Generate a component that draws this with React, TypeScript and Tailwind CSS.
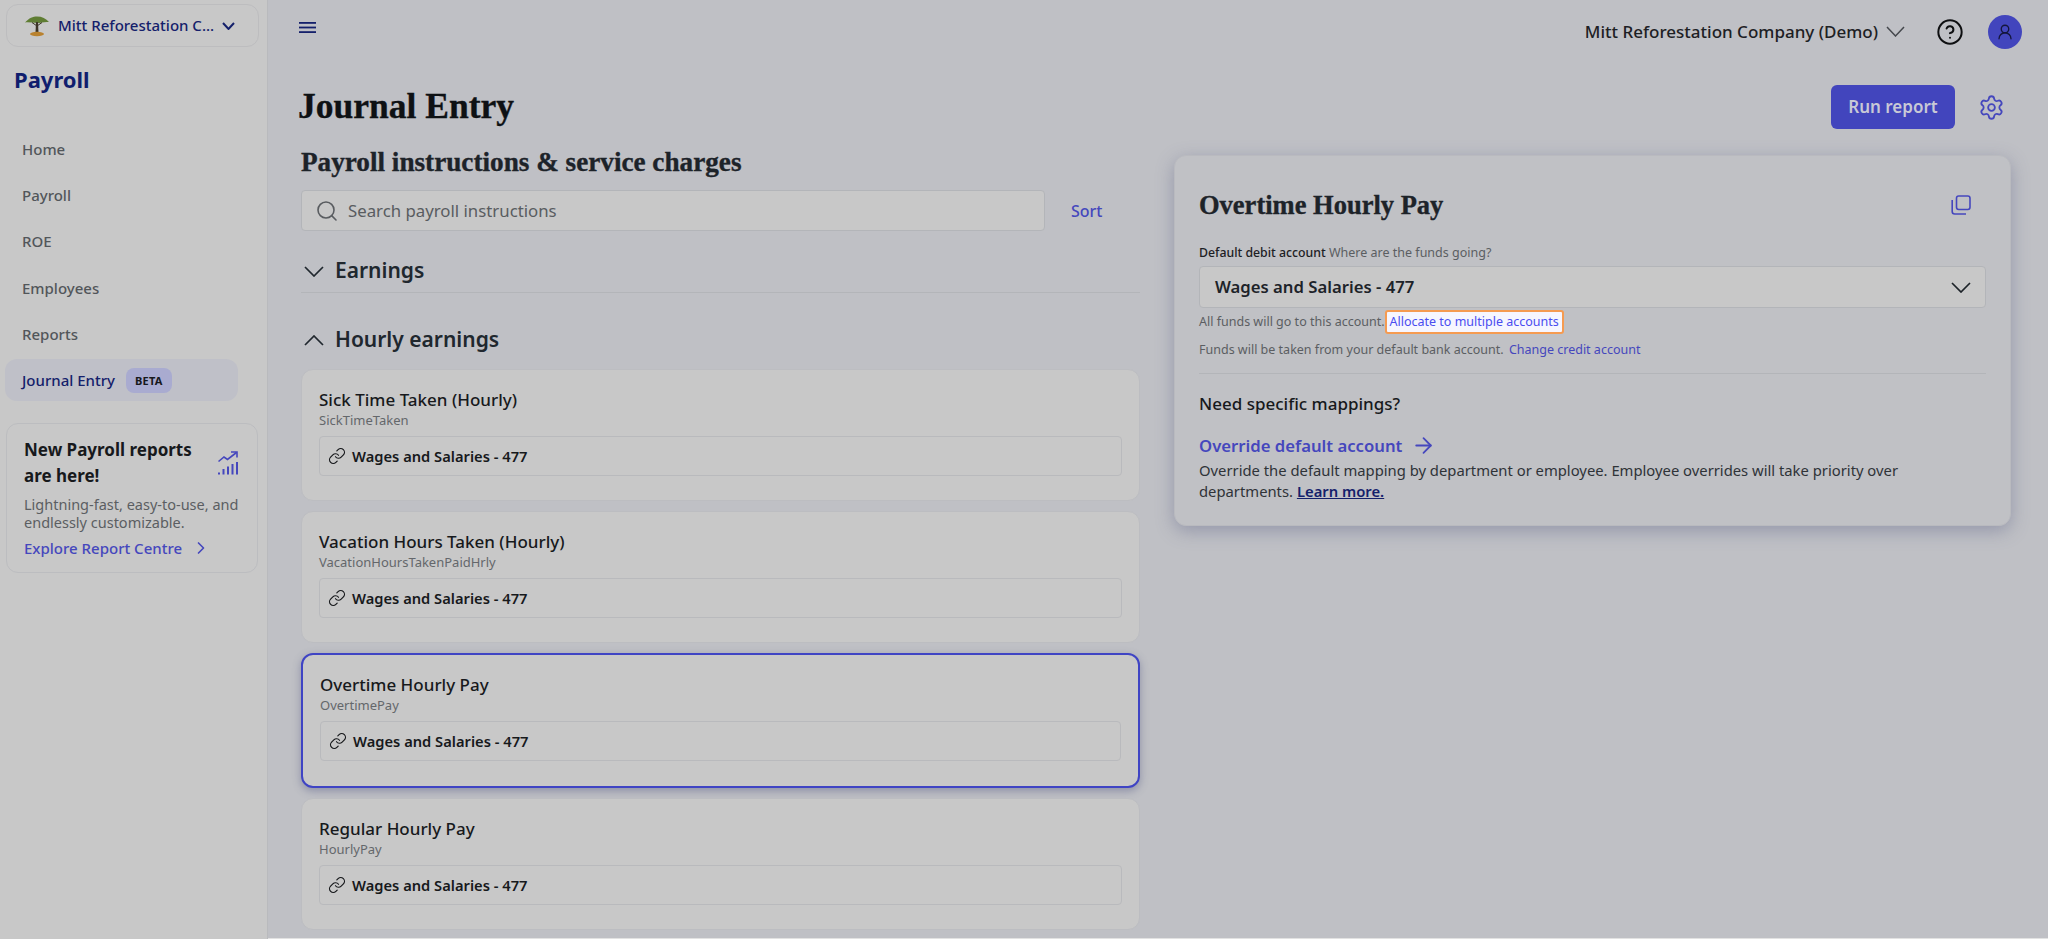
import { ArrowRight, ChevronRight, CircleHelp, Link, Search, Settings, UserRound } from 'lucide-react';

const SANS = "font-['Noto_Sans','Open_Sans',sans-serif]";
const SERIF = "font-['Liberation_Serif','DejaVu_Serif',serif] [-webkit-text-stroke:0.35px]";

const NAV_ITEMS = ['Home', 'Payroll', 'ROE', 'Employees', 'Reports'];

const PAY_CARDS = [
  { title: 'Sick Time Taken (Hourly)', code: 'SickTimeTaken' },
  { title: 'Vacation Hours Taken (Hourly)', code: 'VacationHoursTakenPaidHrly' },
  { title: 'Overtime Hourly Pay', code: 'OvertimePay', selected: true },
  { title: 'Regular Hourly Pay', code: 'HourlyPay' },
];

function Chevron({ className, up, w = 20, h = 11, sw = 1.7 }: { className?: string; up?: boolean; w?: number; h?: number; sw?: number }) {
  return (
    <svg className={className} width={w} height={h} viewBox={`0 0 ${w} ${h}`} fill="none" stroke="currentColor" strokeWidth={sw}>
      <path d={up ? `M1 ${h - 1} L${w / 2} 1 L${w - 1} ${h - 1}` : `M1 1 L${w / 2} ${h - 1} L${w - 1} 1`} />
    </svg>
  );
}

function TreeLogo() {
  return (
    <svg width="26" height="22" viewBox="0 0 26 22">
      <path d="M1 7.5 C5 3 9 1.5 13 1.5 C18 1.5 22 3.5 25 7 C20 6.5 17 8 13 8 C9 8 5 7 1 7.5Z" fill="#5f7d33" />
      <path d="M12 7 L14 7 L14.5 18 L11.5 18Z" fill="#3d3527" />
      <path d="M8 7.5 L13 11 L18 7.5" fill="none" stroke="#3d3527" strokeWidth="1" />
      <ellipse cx="13" cy="19" rx="7" ry="2.2" fill="#b9822f" />
    </svg>
  );
}

function GrowthIcon() {
  return (
    <svg width="20" height="24" viewBox="0 0 20 24" fill="none" stroke="#4547bd" strokeWidth="1.6">
      <path d="M0.5 10.5 L6 6 L9.5 8.5 L18.5 1.5" />
      <path d="M13 1 L19 1 L19 6.5" />
      <path d="M1 23.5 V21.5 M5.5 23.5 V18 M10 23.5 V15.5 M14.5 23.5 V13 M19 23.5 V11" strokeWidth="2" />
    </svg>
  );
}

function Hamburger() {
  return (
    <svg className="text-[#14206b]" width="17" height="11" viewBox="0 0 17 11" fill="currentColor">
      <rect width="17" height="1.8" y="0" />
      <rect width="17" height="1.8" y="4.6" />
      <rect width="17" height="1.8" y="9.2" />
    </svg>
  );
}

function CopyIcon() {
  return (
    <svg width="20" height="20" viewBox="0 0 20 20" fill="none" stroke="#4547bd" strokeWidth="1.6">
      <rect x="5.5" y="1" width="13.5" height="13.5" rx="2.2" />
      <path d="M1.2 5 V16.5 A2.5 2.5 0 0 0 3.7 19 H15" />
    </svg>
  );
}

function Sidebar() {
  return (
    <aside className="w-[268px] shrink-0 border-r border-[#b9babd] bg-[#c8c8c8] pl-[6px] pt-[4px] pr-[10px]">
      <div className="flex h-[43px] w-[253px] items-center rounded-xl border border-[#bdbdbf] pl-[17px]">
        <TreeLogo />
        <span className="ml-[8px] text-[15px] font-medium text-[#14206b]">Mitt Reforestation C...</span>
        <Chevron className="ml-[8px] text-[#14206b]" w={13} h={8} sw={2} />
      </div>
      <h2 className="ml-[8px] mt-[17px] text-[22px] leading-[30px] font-bold text-[#101e6e]">Payroll</h2>
      <nav className="mt-[32px]">
        {NAV_ITEMS.map(item => (
          <div key={item} className="flex h-[46.3px] items-center pl-[16px] text-[15px] font-medium text-[#52565a]">
            {item}
          </div>
        ))}
        <div className="-ml-px mt-[2px] flex h-[42px] w-[233px] items-center rounded-xl bg-[#bfc0c8] pl-[17px] text-[15px] font-medium text-[#14206b]">
          Journal Entry
          <span className="ml-[11px] rounded-lg bg-[#a9abd0] px-[9px] py-[3px] text-[11px] leading-[19px] font-bold tracking-wide text-[#17181c]">BETA</span>
        </div>
      </nav>
      <div className="mt-[22px] h-[150px] w-[252px] rounded-xl border border-[#bcbdc0] pl-[17px] pt-[13px]">
        <div className="flex items-start">
          <p className="w-[190px] text-[17px] leading-[26px] font-bold text-[#17191c]">New Payroll reports are here!</p>
          <div className="ml-[4px] mt-[14px]"><GrowthIcon /></div>
        </div>
        <p className="mt-[6px] text-[14.5px] leading-[18px] text-[#5b5e62]">Lightning-fast, easy-to-use, and endlessly customizable.</p>
        <div className="mt-[7px] flex items-center text-[15px] leading-[20px] font-medium text-[#4547bd]">
          Explore Report Centre
          <ChevronRight className="ml-[9px]" size={20} strokeWidth={2} />
        </div>
      </div>
    </aside>
  );
}

function PayCard({ title, code, selected }: { title: string; code: string; selected?: boolean }) {
  return (
    <div
      className={
        selected
          ? 'h-[135px] rounded-xl border-2 border-[#3f44c4] bg-[#c8c8c8] px-[17px] pt-[17px] shadow-[0_3px_8px_rgba(80,85,130,0.45)]'
          : 'h-[132px] rounded-xl border border-[#bcbdc1] bg-[#c8c8c8] px-[17px] pt-[17px]'
      }
    >
      <div className="text-[17px] leading-[25px] font-medium text-[#17191c]">{title}</div>
      <div className="text-[13px] leading-[17px] text-[#64676b]">{code}</div>
      <div className="mt-[7px] flex h-[40px] items-center rounded border border-[#b9babd] pl-[8px] text-[14.7px] font-semibold text-[#17191c]">
        <Link size={18} strokeWidth={1.6} />
        <span className="ml-[6px]">Wages and Salaries - 477</span>
      </div>
    </div>
  );
}

function LeftColumn() {
  return (
    <div className="w-[839px] shrink-0">
      <h2 className={`${SERIF} text-[27.2px] leading-[32px] font-bold text-[#1d2329]`}>Payroll instructions &amp; service charges</h2>
      <div className="mt-[12px] flex items-center">
        <div className="flex h-[41px] w-[744px] items-center rounded border border-[#b3b5b9] bg-[#c8c8c8] pl-[13px] text-[16.8px] text-[#595c60]">
          <Search size={24} strokeWidth={1.6} />
          <span className="ml-[9px]">Search payroll instructions</span>
        </div>
        <span className="ml-[26px] text-[16px] font-medium text-[#4547bd]">Sort</span>
      </div>
      <div className="mt-[25px] flex h-[37px] items-center border-b border-[#b3b5b9] pb-[6px] text-[#20272e]">
        <Chevron className="ml-[3px]" />
        <span className="ml-[11px] text-[21px] font-semibold">Earnings</span>
      </div>
      <div className="mt-[32px] flex h-[30px] items-center text-[#20272e]">
        <Chevron className="ml-[3px]" up />
        <span className="ml-[11px] text-[21px] font-semibold">Hourly earnings</span>
      </div>
      <div className="mt-[14px] flex flex-col gap-[10px]">
        {PAY_CARDS.map(card => (
          <PayCard key={card.code} {...card} />
        ))}
      </div>
    </div>
  );
}

function DetailPanel() {
  return (
    <section className="h-[371px] w-[837px] shrink-0 rounded-xl border border-[#b9babf] bg-[#c0c1c5] px-[24px] pt-[31px] shadow-[0_5px_18px_rgba(85,90,130,0.4)]">
      <div className="flex items-center justify-between pr-[15px]">
        <h3 className={`${SERIF} text-[26.5px] leading-[36px] font-bold text-[#1d2329]`}>Overtime Hourly Pay</h3>
        <CopyIcon />
      </div>
      <p className="mt-[21px] text-[12.5px] leading-[18px] text-[#5b5e62]">
        <span className="text-[12.3px] font-medium text-[#1d2024]">Default debit account</span> Where are the funds going?
      </p>
      <div className="mt-[4px] flex h-[42px] items-center justify-between rounded border border-[#b3b5b9] bg-[#c8c8c8] pl-[15px] pr-[14px] text-[16.7px] font-semibold text-[#1d2329]">
        Wages and Salaries - 477
        <Chevron />
      </div>
      <p className="mt-[2px] flex h-[24px] items-center text-[12.5px] text-[#5b5e62]">
        All funds will go to this account.
        <span className="rounded-[3px] border-2 border-[#f59b51] bg-[#f6f6ff] px-[3px] leading-[20px] text-[#4a4df0]">Allocate to multiple accounts</span>
      </p>
      <p className="mt-[7px] text-[12.5px] leading-[18px] text-[#5b5e62]">
        Funds will be taken from your default bank account. <span className="ml-[2px] text-[#4547bd]">Change credit account</span>
      </p>
      <div className="mt-[14px] border-t border-[#b3b5b9]" />
      <p className="mt-[17px] text-[17px] leading-[25px] font-medium text-[#17191c]">Need specific mappings?</p>
      <div className="mt-[17px] flex items-center text-[16.7px] leading-[25px] font-semibold text-[#4547bd]">
        Override default account
        <ArrowRight className="ml-[9px]" size={25} strokeWidth={1.7} />
      </div>
      <p className="mt-[2px] text-[14.8px] leading-[21px] text-[#2f3338]">
        Override the default mapping by department or employee. Employee overrides will take priority over departments.{' '}
        <span className="font-semibold text-[#14206b] underline">Learn more.</span>
      </p>
    </section>
  );
}

export default function App() {
  return (
    <div className={`${SANS} flex h-[939px] w-[2048px] overflow-hidden bg-[#e2e2e2]`}>
      <Sidebar />
      <div className="h-[938px] grow overflow-hidden bg-[#bfc0c5]">
        <header className="flex h-[64px] items-center pl-[31px] pr-[26px] pb-[1px]">
          <div className="-mt-[8px]"><Hamburger /></div>
          <span className="ml-auto text-[17px] font-medium text-[#1d2024]">Mitt Reforestation Company (Demo)</span>
          <Chevron className="ml-[8px] text-[#45484d]" w={19} h={11} sw={1.5} />
          <CircleHelp className="ml-[31px] text-[#0e0f11]" size={28} strokeWidth={1.7} />
          <div className="ml-[24px] flex h-[34px] w-[34px] items-center justify-center rounded-full bg-[#4245bd]">
            <UserRound className="text-[#14163c]" size={18} strokeWidth={1.8} />
          </div>
        </header>
        <div className="mt-[21px] flex h-[44px] items-center pl-[30px] pr-[43px]">
          <h1 className={`${SERIF} text-[35.5px] font-bold text-[#0e1114]`}>Journal Entry</h1>
          <button className="ml-auto h-[44px] w-[124px] rounded-md bg-[#4245bd] text-[17px] font-semibold text-[#c8c9d6]">Run report</button>
          <Settings className="ml-[23px] text-[#4547bd]" size={27} strokeWidth={1.6} />
        </div>
        <div className="mt-[17px] flex gap-[34px] pl-[33px]">
          <LeftColumn />
          <div className="pt-[9px]">
            <DetailPanel />
          </div>
        </div>
      </div>
    </div>
  );
}
